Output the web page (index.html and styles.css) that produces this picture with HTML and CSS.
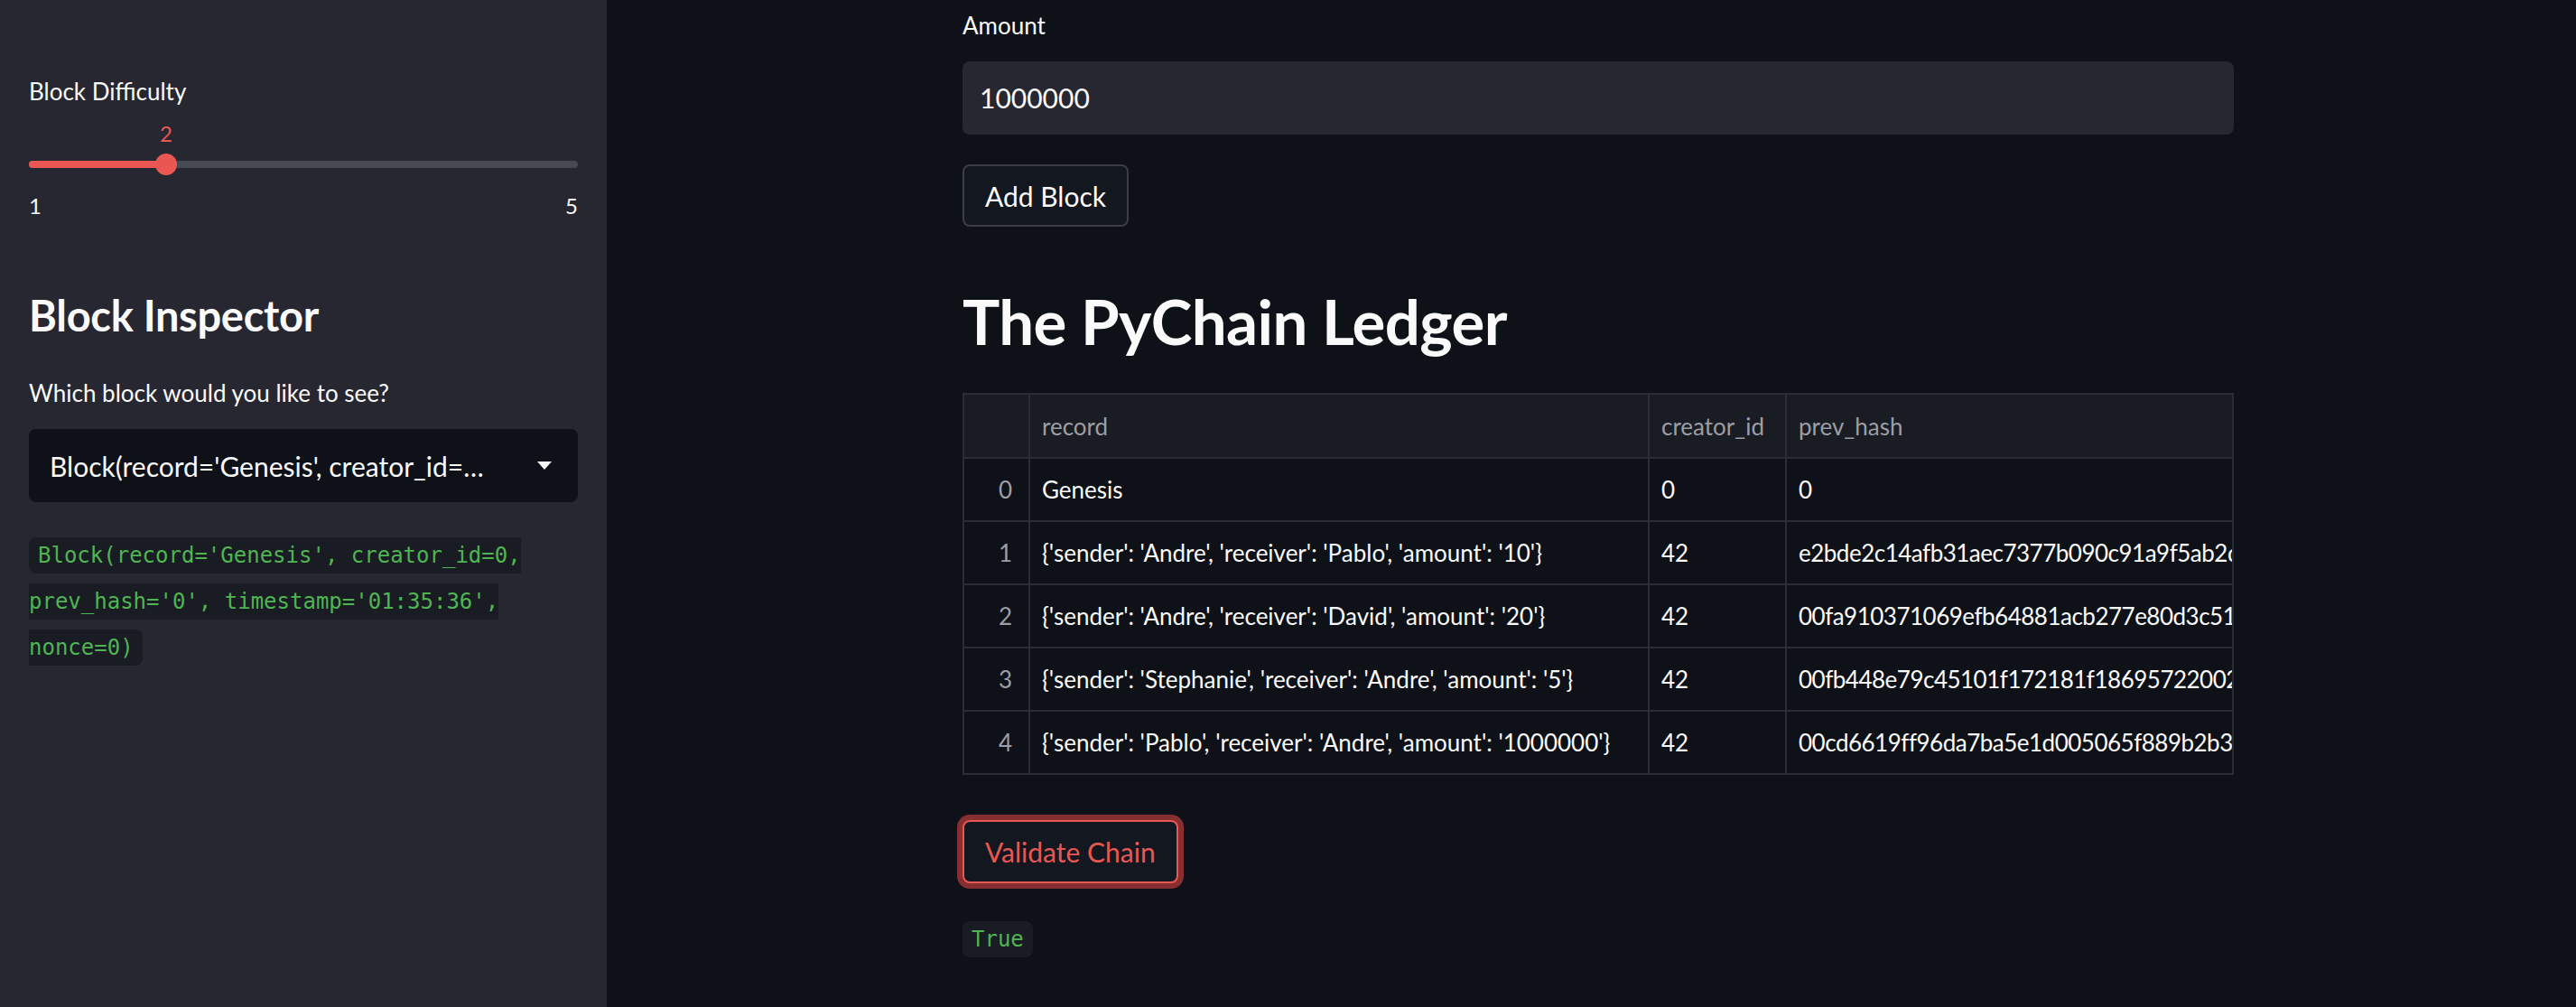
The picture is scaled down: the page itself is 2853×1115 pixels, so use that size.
FILE: index.html
```html
<!DOCTYPE html>
<html lang="en">
<head>
<meta charset="utf-8">
<title>PyChain</title>
<link rel="stylesheet" href="styles.css">
</head>
<body>
<div class="app">
  <aside class="sidebar">
    <label class="lbl">Block Difficulty</label>
    <div class="slider">
      <div class="slider-top"><span class="slider-value" style="left:25%">2</span></div>
      <div class="track-wrap">
        <div class="track"><div class="fill" style="width:25%"></div></div>
        <span class="thumb" style="left:25%"></span>
      </div>
      <div class="ticks"><span>1</span><span>5</span></div>
    </div>
    <h2 class="side-title">Block Inspector</h2>
    <label class="lbl lbl-gap">Which block would you like to see?</label>
    <div class="select">
      <span class="select-text">Block(record='Genesis', creator_id=0, prev_hash='0', timestamp='01:35:36', nonce=0)</span>
      <svg class="caret" width="16" height="9" viewBox="0 0 16 9"><path d="M0 0 L16 0 L8 9 Z" fill="#fafafa"/></svg>
    </div>
    <p class="codepara"><code class="inl">Block(record='Genesis', creator_id=0, prev_hash='0', timestamp='01:35:36', nonce=0)</code></p>
  </aside>
  <main class="main">
    <div class="block">
      <label class="lbl">Amount</label>
      <div class="input">1000000</div>
      <button class="btn">Add Block</button>
      <h1 class="title">The PyChain Ledger</h1>
      <div class="df">
        <div class="row head"><div class="c idx"></div><div class="c">record</div><div class="c">creator_id</div><div class="c">prev_hash</div></div>
        <div class="row"><div class="c idx">0</div><div class="c">Genesis</div><div class="c">0</div><div class="c">0</div></div>
        <div class="row"><div class="c idx">1</div><div class="c">{'sender': 'Andre', 'receiver': 'Pablo', 'amount': '10'}</div><div class="c">42</div><div class="c hash">e2bde2c14afb31aec7377b090c91a9f5ab2d41c07e5b93a8f0c2</div></div>
        <div class="row"><div class="c idx">2</div><div class="c">{'sender': 'Andre', 'receiver': 'David', 'amount': '20'}</div><div class="c">42</div><div class="c hash">00fa910371069efb64881acb277e80d3c514e2f8a7b1c69d03e5</div></div>
        <div class="row"><div class="c idx">3</div><div class="c">{'sender': 'Stephanie', 'receiver': 'Andre', 'amount': '5'}</div><div class="c">42</div><div class="c hash">00fb448e79c45101f172181f18695722002c8d41b6a93e07f5d2</div></div>
        <div class="row"><div class="c idx">4</div><div class="c">{'sender': 'Pablo', 'receiver': 'Andre', 'amount': '1000000'}</div><div class="c">42</div><div class="c hash">00cd6619ff96da7ba5e1d005065f889b2b34a7e19c0d5f82b6e3</div></div>
      </div>
      <button class="btn btn-focus">Validate Chain</button>
      <p class="result"><code class="inl">True</code></p>
    </div>
  </main>
</div>
</body>
</html>
```

FILE: styles.css
```css
* {
  box-sizing: border-box;
  margin: 0;
  padding: 0;
}

html, body {
  height: 100%;
}

body {
  background: #0e1117;
  color: #fafafa;
  font-family: "Lato", "Open Sans", sans-serif;
  overflow: hidden;
}

.app {
  display: flex;
  height: 1115px;
}

/* ---------- sidebar ---------- */
.sidebar {
  width: 672px;
  flex: none;
  background: #262730;
  padding: 83px 32px 0;
  display: flex;
  flex-direction: column;
}

.lbl {
  display: block;
  font-size: 26px;
  line-height: 36px;
}

.lbl-gap {
  margin-top: 40px;
}

.slider {
  margin-top: 14px;
}

.slider-top {
  position: relative;
  height: 30px;
}

.slider-value {
  position: absolute;
  top: 0;
  transform: translateX(-50%);
  color: #ea5753;
  font-size: 24px;
  line-height: 30px;
}

.track-wrap {
  position: relative;
  height: 24px;
  margin-top: 7px;
  display: flex;
  align-items: center;
}

.track {
  width: 100%;
  height: 8px;
  border-radius: 4px;
  background: #484a53;
  overflow: hidden;
}

.fill {
  height: 100%;
  background: #ea5753;
}

.thumb {
  position: absolute;
  top: 0;
  width: 24px;
  height: 24px;
  border-radius: 50%;
  background: #ea5753;
  transform: translateX(-50%);
}

.ticks {
  display: flex;
  justify-content: space-between;
  margin-top: 19px;
  font-size: 24px;
  line-height: 30px;
}

.side-title {
  margin-top: 78px;
  font-size: 47px;
  line-height: 56px;
  font-weight: 700;
  letter-spacing: -0.3px;
}

.select {
  margin-top: 22px;
  height: 81px;
  background: #0e1117;
  border-radius: 8px;
  display: flex;
  align-items: center;
  padding: 0 29px 0 23px;
}

.select-text {
  flex: 1;
  min-width: 0;
  white-space: nowrap;
  overflow: hidden;
  text-overflow: ellipsis;
  font-size: 30px;
  margin-right: 50px;
}

.caret {
  flex: none;
}

.codepara {
  margin-top: 34px;
  line-height: 51px;
  font-family: "DejaVu Sans Mono", "Liberation Mono", monospace;
  font-size: 24px;
}

.inl {
  font-family: "DejaVu Sans Mono", "Liberation Mono", monospace;
  font-size: 24px;
  color: #4fb452;
  background: #1a1c24;
  padding: 6px 10px;
  border-radius: 8px;
  -webkit-box-decoration-break: slice;
  box-decoration-break: slice;
}

/* ---------- main ---------- */
.main {
  flex: 1;
  padding: 10px 0 0 394px;
}

.block {
  width: 1408px;
}

.input {
  margin-top: 22px;
  height: 81px;
  background: #262730;
  border-radius: 8px;
  padding-left: 19px;
  font-size: 30px;
  line-height: 81px;
}

.btn {
  display: block;
  margin-top: 33px;
  height: 69px;
  padding: 0 23px;
  font-family: inherit;
  font-size: 30px;
  color: #fafafa;
  background: #131720;
  border: 2px solid #3b3d45;
  border-radius: 8px;
}

.btn-focus {
  margin-top: 50px;
  height: 70px;
  color: #ea5753;
  border-color: #ea5753;
  box-shadow: 0 0 0 6px rgba(255, 75, 75, 0.5);
}

.title {
  margin-top: 63px;
  font-size: 69px;
  line-height: 84px;
  font-weight: 700;
  letter-spacing: -0.6px;
}

.df {
  margin-top: 37px;
  width: 1408px;
  border: 2px solid #2b2d35;
  border-bottom: none;
  overflow: hidden;
}

.row {
  display: grid;
  grid-template-columns: 73px 686px 152px 1fr;
  height: 70px;
  border-bottom: 2px solid #2b2d35;
  font-size: 26px;
}

.row.head {
  height: 71px;
  background: #1a1c24;
  color: #9c9ea5;
}

.c {
  display: flex;
  align-items: center;
  padding-left: 13px;
  border-right: 2px solid #2b2d35;
  white-space: nowrap;
  overflow: hidden;
}

.c:last-child {
  border-right: none;
}

.c.idx {
  justify-content: flex-end;
  padding: 0 18px 0 0;
  color: #9c9ea5;
}

.c.hash {
  letter-spacing: -0.5px;
}

.result {
  margin-top: 35px;
  line-height: 51px;
  font-size: 24px;
}
```
